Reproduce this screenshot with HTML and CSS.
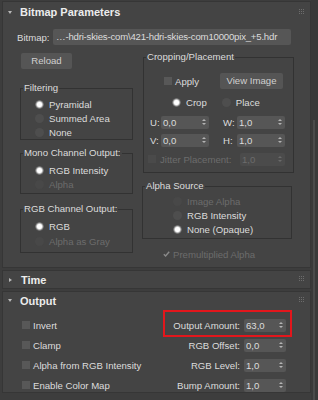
FILE: index.html
```html
<!DOCTYPE html>
<html lang="en">
<head>
    <meta charset="UTF-8">
    <meta name="viewport" content="width=device-width, initial-scale=1.0">
    <title>Bitmap Parameters</title>
    <link rel="stylesheet" href="styles.css">
</head>
<body>

<div class="window">
    <div class="rollouts">

        <section class="rollout bitmap">
            <div class="rollout-head">
                <span class="arrow open"></span>
                <span class="title">Bitmap Parameters</span>
                <svg class="grip" width="5" height="5" viewBox="0 0 5 5"><g fill="#6c6c6c"><rect x="0" y="0" width="1" height="1"/><rect x="2" y="0" width="1" height="1"/><rect x="4" y="0" width="1" height="1"/><rect x="0" y="2" width="1" height="1"/><rect x="2" y="2" width="1" height="1"/><rect x="4" y="2" width="1" height="1"/><rect x="0" y="4" width="1" height="1"/><rect x="2" y="4" width="1" height="1"/><rect x="4" y="4" width="1" height="1"/></g></svg>
            </div>

            <div class="file-row">
                <span class="file-label">Bitmap:</span>
                <div class="field path">…-hdri-skies-com\421-hdri-skies-com10000pix_+5.hdr</div>
            </div>

            <div class="cols">
                <div class="col-left">
                    <div class="btn reload">Reload</div>

                    <fieldset class="group filtering">
                        <legend>Filtering</legend>
                        <div class="opt"><span class="radio on"></span>Pyramidal</div>
                        <div class="opt"><span class="radio"></span>Summed Area</div>
                        <div class="opt"><span class="radio"></span>None</div>
                    </fieldset>

                    <fieldset class="group mono">
                        <legend>Mono Channel Output:</legend>
                        <div class="opt"><span class="radio on"></span>RGB Intensity</div>
                        <div class="opt disabled"><span class="radio"></span>Alpha</div>
                    </fieldset>

                    <fieldset class="group rgb">
                        <legend>RGB Channel Output:</legend>
                        <div class="opt"><span class="radio on"></span>RGB</div>
                        <div class="opt disabled"><span class="radio"></span>Alpha as Gray</div>
                    </fieldset>
                </div>

                <div class="col-right">
                    <fieldset class="group crop">
                        <legend>Cropping/Placement</legend>
                        <div class="crop-row apply-row">
                            <span class="check"></span>
                            <span class="check-text">Apply</span>
                            <div class="btn view">View Image</div>
                        </div>
                        <div class="crop-row mode-row">
                            <div class="opt"><span class="radio on"></span>Crop</div>
                            <div class="opt place"><span class="radio"></span>Place</div>
                        </div>
                        <div class="crop-row uv-row">
                            <span class="axis">U:</span>
                            <div class="spinner uv"><span class="val">0,0</span><span class="arrows"></span></div>
                            <span class="axis second">W:</span>
                            <div class="spinner uv"><span class="val">1,0</span><span class="arrows"></span></div>
                        </div>
                        <div class="crop-row uv-row v-row">
                            <span class="axis">V:</span>
                            <div class="spinner uv"><span class="val">0,0</span><span class="arrows"></span></div>
                            <span class="axis second">H:</span>
                            <div class="spinner uv"><span class="val">1,0</span><span class="arrows"></span></div>
                        </div>
                        <div class="crop-row jitter-row disabled">
                            <span class="check"></span>
                            <span class="check-text">Jitter Placement:</span>
                            <div class="spinner jitter"><span class="val">1,0</span><span class="arrows"></span></div>
                        </div>
                    </fieldset>

                    <fieldset class="group alpha">
                        <legend>Alpha Source</legend>
                        <div class="opt disabled"><span class="radio"></span>Image Alpha</div>
                        <div class="opt"><span class="radio"></span>RGB Intensity</div>
                        <div class="opt"><span class="radio on"></span>None (Opaque)</div>
                    </fieldset>

                    <div class="premult disabled">
                        <svg class="tick" width="7" height="6" viewBox="0 0 7 6"><path d="M0.8 3.2 L2.6 5 L6.2 0.8" fill="none" stroke="#8a8a8a" stroke-width="1.4"/></svg>
                        <span>Premultiplied Alpha</span>
                    </div>
                </div>
            </div>
        </section>

        <section class="rollout closed">
            <div class="rollout-head">
                <span class="arrow shut"></span>
                <span class="title">Time</span>
                <svg class="grip" width="5" height="5" viewBox="0 0 5 5"><g fill="#6c6c6c"><rect x="0" y="0" width="1" height="1"/><rect x="2" y="0" width="1" height="1"/><rect x="4" y="0" width="1" height="1"/><rect x="0" y="2" width="1" height="1"/><rect x="2" y="2" width="1" height="1"/><rect x="4" y="2" width="1" height="1"/><rect x="0" y="4" width="1" height="1"/><rect x="2" y="4" width="1" height="1"/><rect x="4" y="4" width="1" height="1"/></g></svg>
            </div>
        </section>

        <section class="rollout output">
            <div class="rollout-head">
                <span class="arrow open"></span>
                <span class="title">Output</span>
                <svg class="grip" width="5" height="5" viewBox="0 0 5 5"><g fill="#6c6c6c"><rect x="0" y="0" width="1" height="1"/><rect x="2" y="0" width="1" height="1"/><rect x="4" y="0" width="1" height="1"/><rect x="0" y="2" width="1" height="1"/><rect x="2" y="2" width="1" height="1"/><rect x="4" y="2" width="1" height="1"/><rect x="0" y="4" width="1" height="1"/><rect x="2" y="4" width="1" height="1"/><rect x="4" y="4" width="1" height="1"/></g></svg>
            </div>

            <div class="out-row first">
                <div class="out-check"><span class="check"></span>Invert</div>
                <div class="param marked">
                    <span class="param-label">Output Amount:</span>
                    <div class="spinner out"><span class="val">63,0</span><span class="arrows"></span></div>
                </div>
            </div>
            <div class="out-row">
                <div class="out-check"><span class="check"></span>Clamp</div>
                <div class="param">
                    <span class="param-label">RGB Offset:</span>
                    <div class="spinner out"><span class="val">0,0</span><span class="arrows"></span></div>
                </div>
            </div>
            <div class="out-row">
                <div class="out-check"><span class="check"></span>Alpha from RGB Intensity</div>
                <div class="param">
                    <span class="param-label">RGB Level:</span>
                    <div class="spinner out"><span class="val">1,0</span><span class="arrows"></span></div>
                </div>
            </div>
            <div class="out-row">
                <div class="out-check"><span class="check"></span>Enable Color Map</div>
                <div class="param">
                    <span class="param-label">Bump Amount:</span>
                    <div class="spinner out"><span class="val">1,0</span><span class="arrows"></span></div>
                </div>
            </div>
        </section>

    </div>
    <div class="scrollbar"><div class="thumb"></div></div>
</div>

</body>
</html>
```

FILE: styles.css
```css
* {
    box-sizing: border-box;
}
html, body {
    margin: 0;
    padding: 0;
}
body {
    background-color: #3d3d3d;
    font-family: "Liberation Sans", Arial, sans-serif;
    font-size: 9.6px;
    color: #dcdcdc;
}
.window {
    display: flex;
    width: 318px;
    height: 400px;
    overflow: hidden;
}
.rollouts {
    width: 311px;
    padding-left: 2px;
    padding-top: 1px;
}
.rollout {
    background-color: #444444;
    border: 1px solid #363636;
}
.rollout + .rollout {
    margin-top: 2px;
}
.rollout-head {
    display: flex;
    align-items: center;
    height: 20px;
    padding-left: 5px;
    padding-right: 6px;
}
.arrow {
    width: 0;
    height: 0;
    margin-right: 8px;
}
.arrow.open {
    border-left: 2.5px solid transparent;
    border-right: 2.5px solid transparent;
    border-top: 3px solid #b8b8b8;
}
.arrow.shut {
    margin-left: 1px;
    margin-right: 9px;
    border-top: 2.5px solid transparent;
    border-bottom: 2.5px solid transparent;
    border-left: 3px solid #b8b8b8;
}
.title {
    font-size: 11px;
    font-weight: bold;
    color: #ececec;
    flex: 1;
}
.grip {
    display: block;
    margin-top: -2px;
}
.closed .rollout-head {
    height: 17px;
}
.output .rollout-head {
    height: 17px;
}

/* bitmap rollout */
.file-row {
    display: flex;
    align-items: center;
    margin-top: 7px;
    height: 16px;
    padding-left: 14px;
}
.file-label {
    width: 36px;
}
.field {
    background-color: #565656;
    border-radius: 2px;
    height: 16px;
    line-height: 16px;
}
.path {
    width: 238px;
    padding-left: 3px;
    letter-spacing: -0.2px;
    white-space: nowrap;
    overflow: hidden;
}
.cols {
    display: flex;
    padding-left: 17px;
    padding-bottom: 6px;
}
.col-left {
    width: 113px;
}
.col-right {
    width: 152px;
    margin-left: 9px;
}
.btn {
    background-color: #555555;
    border-radius: 2px;
    height: 16px;
    line-height: 16px;
    text-align: center;
    color: #d0d0d0;
}
.reload {
    width: 51px;
    margin-left: 1px;
    margin-top: 8px;
}
.group {
    margin: 0;
    padding: 3px 0 0 0;
    border: 1px solid #323232;
    min-inline-size: 0;
}
.group legend {
    padding: 0 1px;
    margin-left: 2px;
    line-height: 12px;
    height: 12px;
}
.opt {
    display: flex;
    align-items: center;
    height: 14px;
    padding-left: 14px;
}
.radio {
    width: 9px;
    height: 9px;
    border-radius: 50%;
    background-color: #4e4e4e;
    margin-right: 5px;
    flex-shrink: 0;
}
.radio.on {
    background: radial-gradient(circle, #ffffff 0 2px, #e6e6e6 2.6px, #8a8a8a 3.6px, #565656 4.5px);
}
.disabled {
    color: #6c6c6c;
}
.disabled .radio {
    background-color: #484848;
}
.filtering {
    margin-top: 13px;
}
.mono {
    margin-top: 7px;
    padding-top: 4px;
    padding-bottom: 2px;
}
.rgb {
    margin-top: 9px;
    padding-top: 4px;
    padding-bottom: 4px;
}
.rgb .opt + .opt {
    margin-top: 1px;
}

/* crop / placement */
.crop {
    margin-top: 6px;
    margin-left: 1px;
    width: 151px;
    padding-top: 10px;
    padding-bottom: 6px;
}
.crop-row {
    display: flex;
    align-items: center;
    height: 14px;
}
.apply-row {
    height: 16px;
    padding-left: 20px;
    padding-right: 10px;
}
.check {
    width: 8px;
    height: 8px;
    background-color: #585858;
    margin-right: 3px;
    flex-shrink: 0;
}
.disabled .check {
    background-color: #4a4a4a;
}
.view {
    width: 63px;
    margin-left: auto;
}
.mode-row {
    margin-top: 6px;
}
.mode-row .opt {
    padding-left: 28px;
}
.mode-row .place {
    padding-left: 15px;
}
.uv-row {
    margin-top: 6px;
    padding-left: 6px;
}
.v-row {
    margin-top: 4px;
}
.axis {
    width: 11px;
}
.axis.second {
    width: 14px;
    margin-left: 14px;
}
.spinner {
    display: flex;
    align-items: center;
    height: 13px;
    background-color: #565656;
    border-radius: 2px;
    padding-left: 2px;
    padding-right: 3px;
}
.spinner .val {
    flex: 1;
}
.arrows {
    display: flex;
    flex-direction: column;
    gap: 2px;
    width: 4px;
}
.arrows::before {
    content: "";
    border-left: 2px solid transparent;
    border-right: 2px solid transparent;
    border-bottom: 2px solid #b4b4b4;
}
.arrows::after {
    content: "";
    border-left: 2px solid transparent;
    border-right: 2px solid transparent;
    border-top: 2px solid #b4b4b4;
}
.uv {
    width: 48px;
}
.jitter-row {
    margin-top: 5px;
    padding-left: 4px;
}
.jitter-row .check {
    margin-right: 4px;
}
.jitter {
    width: 45px;
    margin-left: auto;
    margin-right: 8px;
    background-color: #4b4b4b;
}
.jitter .arrows::before {
    border-bottom-color: #6a6a6a;
}
.jitter .arrows::after {
    border-top-color: #6a6a6a;
}
.alpha {
    margin-top: 7px;
    width: 150px;
    padding-top: 2px;
    padding-bottom: 2px;
}
.alpha .opt {
    padding-left: 30px;
}
.premult {
    display: flex;
    align-items: center;
    height: 14px;
    margin-top: 8px;
    padding-left: 21px;
}
.tick {
    display: block;
    margin-right: 3px;
}

/* output rollout */
.out-row {
    display: flex;
    align-items: center;
    justify-content: space-between;
    height: 14px;
    padding-left: 19px;
    padding-right: 24px;
    margin-top: 6px;
}
.out-row.first {
    height: 27px;
    margin-top: 1px;
}
.out-row.first + .out-row {
    margin-top: 1px;
}
.first .out-check {
    margin-top: 3px;
}
.out-check {
    display: flex;
    align-items: center;
}
.param {
    display: flex;
    align-items: center;
}
.param-label {
    margin-right: 4px;
}
.marked {
    height: 27px;
    width: 129px;
    border: 2px solid #e3161c;
    margin-right: -6px;
    padding-top: 3px;
    padding-right: 4px;
    justify-content: flex-end;
}
.out {
    width: 42px;
}

.scrollbar {
    width: 7px;
    background-color: #393939;
    padding-top: 120px;
    padding-left: 2px;
}
.thumb {
    width: 2px;
    height: 280px;
    background-color: #4a4a4a;
}
```
